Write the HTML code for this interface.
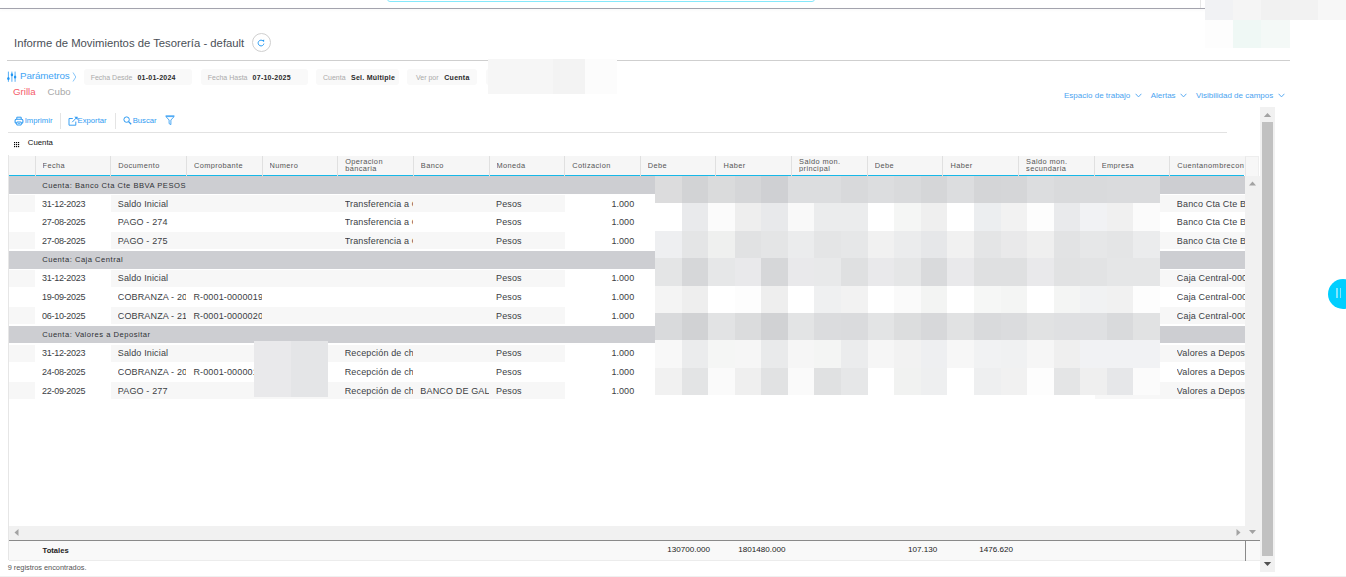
<!DOCTYPE html><html><head><meta charset="utf-8"><style>
*{margin:0;padding:0;box-sizing:border-box}
html,body{width:1346px;height:577px;overflow:hidden;background:#fff;font-family:"Liberation Sans", sans-serif;position:relative}
.a{position:absolute}
.t{position:absolute;white-space:nowrap;line-height:1}
</style></head><body>
<div class="a" style="left:387px;top:-20px;width:428px;height:22px;border:1px solid #85e8fb;border-radius:3px"></div>
<div class="a" style="left:0;top:8px;width:1205px;height:1px;background:#a3a3ad;box-shadow:0 1px 3px rgba(0,0,0,0.06)"></div>
<div class="a" style="left:1200px;top:0;width:1px;height:8px;background:#e6e6e6"></div>
<div class="a" style="left:1205.00px;top:0;width:28.3px;height:20px;background:#f1f2f4"></div>
<div class="a" style="left:1233.20px;top:0;width:28.3px;height:20px;background:#f5f5f5"></div>
<div class="a" style="left:1261.40px;top:0;width:28.3px;height:20px;background:#f1f1f1"></div>
<div class="a" style="left:1289.60px;top:0;width:28.3px;height:20px;background:#f2f2f2"></div>
<div class="a" style="left:1317.80px;top:0;width:28.3px;height:20px;background:#f7f7f7"></div>
<div class="a" style="left:1205.00px;top:20px;width:28.3px;height:28px;background:#fdfdfd"></div>
<div class="a" style="left:1233.20px;top:20px;width:28.3px;height:28px;background:#eff8f5"></div>
<div class="a" style="left:1261.40px;top:20px;width:28.3px;height:28px;background:#f4f9f7"></div>
<div class="a" style="left:1289.60px;top:20px;width:28.3px;height:28px;background:#ffffff"></div>
<div class="a" style="left:1317.80px;top:20px;width:28.3px;height:28px;background:#ffffff"></div>
<div class="t" style="left:14px;top:37.8px;font-size:11.3px;color:#4a4f57">Informe de Movimientos de Tesorería - default</div>
<div class="a" style="left:252px;top:33px;width:19px;height:19px;border:1px solid #cfcfcf;border-radius:50%"></div>
<svg class="a" style="left:257px;top:39px" width="8" height="8" viewBox="0 0 8 8"><path d="M6.3 2.2 A2.9 2.9 0 1 0 6.9 4.6" fill="none" stroke="#2a9df4" stroke-width="1"/><path d="M4.9 1.6 L7.2 0.6 L7.1 3.1 Z" fill="#2a9df4"/></svg>
<div class="a" style="left:7px;top:60px;width:1283px;height:1px;background:#cfcfcf"></div>
<svg class="a" style="left:7px;top:70.5px" width="10" height="11.5" viewBox="0 0 10 11.5"><path d="M1.4 0.6V10.8M4.9 0.6V10.8M8.1 0.6V10.8" stroke="#42a5f5" stroke-width="0.9"/><ellipse cx="1.4" cy="7.5" rx="1.2" ry="1.5" fill="#2196f3"/><ellipse cx="4.9" cy="3.75" rx="1.2" ry="1.5" fill="#2196f3"/><ellipse cx="8.1" cy="6" rx="1.2" ry="1.5" fill="#2196f3"/></svg>
<div class="t" style="left:20px;top:70.5px;font-size:9.8px;letter-spacing:-0.1px;color:#42a5f5">Parámetros</div>
<svg class="a" style="left:72px;top:72px" width="5" height="10" viewBox="0 0 5 10"><path d="M1 0.5 L3.8 5 L1 9.5" fill="none" stroke="#69b8f7" stroke-width="0.8"/></svg>
<div class="a" style="left:84px;top:69px;width:108px;height:16px;background:#f9f9f9;border-radius:3px"></div>
<div class="t" style="left:90.7px;top:74px;font-size:7px;color:#aaaaaa">Fecha Desde</div>
<div class="t" style="left:137.4px;top:74px;font-size:7px;font-weight:bold;letter-spacing:0.25px;color:#2a2a2a">01-01-2024</div>
<div class="a" style="left:201px;top:69px;width:107px;height:16px;background:#f9f9f9;border-radius:3px"></div>
<div class="t" style="left:207.8px;top:74px;font-size:7px;color:#aaaaaa">Fecha Hasta</div>
<div class="t" style="left:252.6px;top:74px;font-size:7px;font-weight:bold;letter-spacing:0.25px;color:#2a2a2a">07-10-2025</div>
<div class="a" style="left:316px;top:69px;width:83px;height:16px;background:#f9f9f9;border-radius:3px"></div>
<div class="t" style="left:323px;top:74px;font-size:7px;color:#aaaaaa">Cuenta</div>
<div class="t" style="left:351px;top:74px;font-size:7px;font-weight:bold;letter-spacing:0.25px;color:#2a2a2a">Sel. Múltiple</div>
<div class="a" style="left:407px;top:69px;width:70px;height:16px;background:#f9f9f9;border-radius:3px"></div>
<div class="t" style="left:416px;top:74px;font-size:7px;color:#aaaaaa">Ver por</div>
<div class="t" style="left:444.3px;top:74px;font-size:7px;font-weight:bold;letter-spacing:0.25px;color:#2a2a2a">Cuenta</div>
<div class="a" style="left:486px;top:69px;width:74px;height:16px;background:#f9f9f9;border-radius:3px"></div>
<div class="a" style="left:488.00px;top:59px;width:32.3px;height:35px;background:#f6f6f6"></div>
<div class="a" style="left:520.25px;top:59px;width:32.3px;height:35px;background:#f6f6f6"></div>
<div class="a" style="left:552.50px;top:59px;width:32.3px;height:35px;background:#f3f3f3"></div>
<div class="a" style="left:584.75px;top:59px;width:32.3px;height:35px;background:#fcfcfc"></div>
<div class="t" style="left:13px;top:86.8px;font-size:9.7px;color:#f45b69">Grilla</div>
<div class="t" style="left:47.5px;top:86.8px;font-size:9.7px;color:#a8a8a8">Cubo</div>
<div class="t" style="left:1064px;top:92px;font-size:8px;color:#4aa3f0">Espacio de trabajo</div>
<svg class="a" style="left:1134.5px;top:93.3px" width="7" height="5" viewBox="0 0 7 5"><path d="M0.6 0.8 L3.5 3.9 L6.4 0.8" fill="none" stroke="#4aa3f0" stroke-width="0.9"/></svg>
<div class="t" style="left:1150.7px;top:92px;font-size:8px;color:#4aa3f0">Alertas</div>
<svg class="a" style="left:1179.5px;top:93.3px" width="7" height="5" viewBox="0 0 7 5"><path d="M0.6 0.8 L3.5 3.9 L6.4 0.8" fill="none" stroke="#4aa3f0" stroke-width="0.9"/></svg>
<div class="t" style="left:1196px;top:92px;font-size:8px;color:#4aa3f0">Visibilidad de campos</div>
<svg class="a" style="left:1277.5px;top:93.3px" width="7" height="5" viewBox="0 0 7 5"><path d="M0.6 0.8 L3.5 3.9 L6.4 0.8" fill="none" stroke="#4aa3f0" stroke-width="0.9"/></svg>
<svg class="a" style="left:13.5px;top:115.5px" width="10" height="10" viewBox="0 0 10 10"><path d="M2.8 3.2V1.2H7.2V3.2" fill="none" stroke="#2f9bf2" stroke-width="1"/><rect x="1.1" y="3.3" width="7.8" height="4" rx="1.3" fill="none" stroke="#2f9bf2" stroke-width="1.1"/><path d="M2.8 6H7.2V9H2.8Z" fill="#fff" stroke="#2f9bf2" stroke-width="1"/><path d="M4 7.4H6" stroke="#2f9bf2" stroke-width="0.8"/></svg>
<div class="t" style="left:24.7px;top:116.5px;font-size:7.7px;color:#2f9bf2">Imprimir</div>
<div class="a" style="left:60px;top:113px;width:1px;height:16px;background:#e4e4e4"></div>
<svg class="a" style="left:67.5px;top:115.5px" width="11" height="10" viewBox="0 0 11 10"><path d="M4.8 2.5H1V9.2H7.8V5.6" fill="none" stroke="#2f9bf2" stroke-width="0.95"/><path d="M4.2 6.2 L8.6 1.6" stroke="#2f9bf2" stroke-width="0.95"/><path d="M6.3 0.7H9.6V4Z" fill="#2f9bf2"/></svg>
<div class="t" style="left:77.6px;top:116.5px;font-size:7.7px;color:#2f9bf2">Exportar</div>
<div class="a" style="left:115px;top:113px;width:1px;height:16px;background:#e4e4e4"></div>
<svg class="a" style="left:122.5px;top:115.5px" width="9" height="9" viewBox="0 0 9 9"><circle cx="3.6" cy="3.6" r="2.7" fill="none" stroke="#2f9bf2" stroke-width="1"/><path d="M5.6 5.6 L8.2 8.2" stroke="#2f9bf2" stroke-width="1.3"/></svg>
<div class="t" style="left:132.7px;top:116.5px;font-size:7.7px;color:#2f9bf2">Buscar</div>
<svg class="a" style="left:164.5px;top:115px" width="10" height="10" viewBox="0 0 10 10"><path d="M0.6 0.8H9.4M0.9 1.6H9.1L5.9 5V9.6L4.1 8.6V5Z" fill="none" stroke="#2f9bf2" stroke-width="0.85"/></svg>
<div class="a" style="left:8px;top:132px;width:1219px;height:1px;background:#e2e2e2"></div>
<svg class="a" style="left:14px;top:142px" width="6" height="6" viewBox="0 0 6 6"><rect x="0" y="0" width="1.15" height="1.15" fill="#000"/><rect x="2" y="0" width="1.15" height="1.15" fill="#000"/><rect x="4" y="0" width="1.15" height="1.15" fill="#000"/><rect x="0" y="2" width="1.15" height="1.15" fill="#000"/><rect x="2" y="2" width="1.15" height="1.15" fill="#000"/><rect x="4" y="2" width="1.15" height="1.15" fill="#000"/><rect x="0" y="4" width="1.15" height="1.15" fill="#000"/><rect x="2" y="4" width="1.15" height="1.15" fill="#000"/><rect x="4" y="4" width="1.15" height="1.15" fill="#000"/></svg>
<div class="t" style="left:27.8px;top:138.6px;font-size:7.8px;color:#111">Cuenta</div>
<div class="a" style="left:1260px;top:107px;width:15px;height:465px;background:#f1f1f1"></div>
<div class="a" style="left:1262px;top:122px;width:11px;height:434px;background:#c1c1c1"></div>
<svg class="a" style="left:1263px;top:112px" width="9" height="6" viewBox="0 0 9 6"><path d="M0.8 5 L4.5 1 L8.2 5Z" fill="#a3a3a3"/></svg>
<svg class="a" style="left:1263px;top:561px" width="9" height="6" viewBox="0 0 9 6"><path d="M0.8 1 L4.5 5 L8.2 1Z" fill="#505050"/></svg>
<div class="a" style="left:8px;top:155px;width:1px;height:405px;background:#e6e6e6"></div>
<div class="a" style="left:9px;top:155.5px;width:1236px;height:19.5px;background:#f6f6f6"></div>
<div class="a" style="left:9px;top:175px;width:1235px;height:1.3px;background:#16b8e8"></div>
<div class="a" style="left:34.60px;top:155.5px;width:1px;height:20.5px;background:#e0e0e0"></div>
<div class="a" style="left:110.25px;top:155.5px;width:1px;height:20.5px;background:#e0e0e0"></div>
<div class="a" style="left:185.90px;top:155.5px;width:1px;height:20.5px;background:#e0e0e0"></div>
<div class="a" style="left:261.55px;top:155.5px;width:1px;height:20.5px;background:#e0e0e0"></div>
<div class="a" style="left:337.20px;top:155.5px;width:1px;height:20.5px;background:#e0e0e0"></div>
<div class="a" style="left:412.85px;top:155.5px;width:1px;height:20.5px;background:#e0e0e0"></div>
<div class="a" style="left:488.50px;top:155.5px;width:1px;height:20.5px;background:#e0e0e0"></div>
<div class="a" style="left:564.15px;top:155.5px;width:1px;height:20.5px;background:#e0e0e0"></div>
<div class="a" style="left:639.80px;top:155.5px;width:1px;height:20.5px;background:#e0e0e0"></div>
<div class="a" style="left:715.45px;top:155.5px;width:1px;height:20.5px;background:#e0e0e0"></div>
<div class="a" style="left:791.10px;top:155.5px;width:1px;height:20.5px;background:#e0e0e0"></div>
<div class="a" style="left:866.75px;top:155.5px;width:1px;height:20.5px;background:#e0e0e0"></div>
<div class="a" style="left:942.40px;top:155.5px;width:1px;height:20.5px;background:#e0e0e0"></div>
<div class="a" style="left:1018.05px;top:155.5px;width:1px;height:20.5px;background:#e0e0e0"></div>
<div class="a" style="left:1093.70px;top:155.5px;width:1px;height:20.5px;background:#e0e0e0"></div>
<div class="a" style="left:1169.35px;top:155.5px;width:1px;height:20.5px;background:#e0e0e0"></div>
<div class="t" style="left:42.60px;top:161.6px;width:66.7px;overflow:hidden;font-size:7.4px;letter-spacing:0.4px;color:#555">Fecha</div>
<div class="t" style="left:118.25px;top:161.6px;width:66.7px;overflow:hidden;font-size:7.4px;letter-spacing:0.4px;color:#555">Documento</div>
<div class="t" style="left:193.90px;top:161.6px;width:66.7px;overflow:hidden;font-size:7.4px;letter-spacing:0.4px;color:#555">Comprobante</div>
<div class="t" style="left:269.55px;top:161.6px;width:66.7px;overflow:hidden;font-size:7.4px;letter-spacing:0.4px;color:#555">Numero</div>
<div class="t" style="left:345.20px;top:158.1px;width:66.7px;overflow:hidden;font-size:7.4px;letter-spacing:0.4px;line-height:7.1px;color:#555">Operacion<br>bancaria</div>
<div class="t" style="left:420.85px;top:161.6px;width:66.7px;overflow:hidden;font-size:7.4px;letter-spacing:0.4px;color:#555">Banco</div>
<div class="t" style="left:496.50px;top:161.6px;width:66.7px;overflow:hidden;font-size:7.4px;letter-spacing:0.4px;color:#555">Moneda</div>
<div class="t" style="left:572.15px;top:161.6px;width:66.7px;overflow:hidden;font-size:7.4px;letter-spacing:0.4px;color:#555">Cotizacion</div>
<div class="t" style="left:647.80px;top:161.6px;width:66.7px;overflow:hidden;font-size:7.4px;letter-spacing:0.4px;color:#555">Debe</div>
<div class="t" style="left:723.45px;top:161.6px;width:66.7px;overflow:hidden;font-size:7.4px;letter-spacing:0.4px;color:#555">Haber</div>
<div class="t" style="left:799.10px;top:158.1px;width:66.7px;overflow:hidden;font-size:7.4px;letter-spacing:0.4px;line-height:7.1px;color:#555">Saldo mon.<br>principal</div>
<div class="t" style="left:874.75px;top:161.6px;width:66.7px;overflow:hidden;font-size:7.4px;letter-spacing:0.4px;color:#555">Debe</div>
<div class="t" style="left:950.40px;top:161.6px;width:66.7px;overflow:hidden;font-size:7.4px;letter-spacing:0.4px;color:#555">Haber</div>
<div class="t" style="left:1026.05px;top:158.1px;width:66.7px;overflow:hidden;font-size:7.4px;letter-spacing:0.4px;line-height:7.1px;color:#555">Saldo mon.<br>secundaria</div>
<div class="t" style="left:1101.70px;top:161.6px;width:66.7px;overflow:hidden;font-size:7.4px;letter-spacing:0.4px;color:#555">Empresa</div>
<div class="t" style="left:1177.35px;top:161.6px;width:66.7px;overflow:hidden;font-size:7.4px;letter-spacing:0.4px;color:#555">Cuentanombrecontable</div>
<div class="a" style="left:1245px;top:155.5px;width:14px;height:20px;background:#f7f7f7;border-left:1px solid #e8e8e8;border-top:1px solid #eeeeee;border-right:1px solid #eeeeee"></div>
<div class="a" style="left:9px;top:176.00px;width:1236px;height:17.80px;background:#cdced2"></div>
<div class="t" style="left:42.2px;top:181.60px;font-size:7.6px;letter-spacing:0.5px;color:#2e3035">Cuenta: Banco Cta Cte BBVA PESOS</div>
<div class="a" style="left:9px;top:194.90px;width:25.60px;height:17.10px;background:#f7f7f7"></div>
<div class="a" style="left:111.05px;top:194.90px;width:453.60px;height:17.10px;background:#f7f7f7"></div>
<div class="a" style="left:1094.50px;top:194.90px;width:150.50px;height:17.10px;background:#f7f7f7"></div>
<div class="t" style="left:42.10px;top:199.60px;width:68.20px;overflow:hidden;font-size:9px;letter-spacing:-0.3px;color:#3b3e44">31-12-2023</div>
<div class="t" style="left:117.75px;top:199.60px;width:68.20px;overflow:hidden;font-size:9px;letter-spacing:0.15px;color:#3b3e44">Saldo Inicial</div>
<div class="t" style="left:344.70px;top:199.60px;width:68.20px;overflow:hidden;font-size:9px;letter-spacing:0.15px;color:#3b3e44">Transferencia a Caja</div>
<div class="t" style="left:496.00px;top:199.60px;width:68.20px;overflow:hidden;font-size:9px;letter-spacing:0.15px;color:#3b3e44">Pesos</div>
<div class="t" style="left:564.15px;top:199.60px;width:70.00px;text-align:right;font-size:9px;color:#3b3e44">1.000</div>
<div class="t" style="left:1176.85px;top:199.60px;width:68.20px;overflow:hidden;font-size:9px;letter-spacing:0.15px;color:#3b3e44">Banco Cta Cte BBVA</div>
<div class="t" style="left:42.10px;top:218.30px;width:68.20px;overflow:hidden;font-size:9px;letter-spacing:-0.3px;color:#3b3e44">27-08-2025</div>
<div class="t" style="left:117.75px;top:218.30px;width:68.20px;overflow:hidden;font-size:9px;letter-spacing:0.15px;color:#3b3e44">PAGO - 274</div>
<div class="t" style="left:344.70px;top:218.30px;width:68.20px;overflow:hidden;font-size:9px;letter-spacing:0.15px;color:#3b3e44">Transferencia a Caja</div>
<div class="t" style="left:496.00px;top:218.30px;width:68.20px;overflow:hidden;font-size:9px;letter-spacing:0.15px;color:#3b3e44">Pesos</div>
<div class="t" style="left:564.15px;top:218.30px;width:70.00px;text-align:right;font-size:9px;color:#3b3e44">1.000</div>
<div class="t" style="left:1176.85px;top:218.30px;width:68.20px;overflow:hidden;font-size:9px;letter-spacing:0.15px;color:#3b3e44">Banco Cta Cte BBVA</div>
<div class="a" style="left:9px;top:232.30px;width:25.60px;height:17.10px;background:#f7f7f7"></div>
<div class="a" style="left:111.05px;top:232.30px;width:453.60px;height:17.10px;background:#f7f7f7"></div>
<div class="a" style="left:1094.50px;top:232.30px;width:150.50px;height:17.10px;background:#f7f7f7"></div>
<div class="t" style="left:42.10px;top:237.00px;width:68.20px;overflow:hidden;font-size:9px;letter-spacing:-0.3px;color:#3b3e44">27-08-2025</div>
<div class="t" style="left:117.75px;top:237.00px;width:68.20px;overflow:hidden;font-size:9px;letter-spacing:0.15px;color:#3b3e44">PAGO - 275</div>
<div class="t" style="left:344.70px;top:237.00px;width:68.20px;overflow:hidden;font-size:9px;letter-spacing:0.15px;color:#3b3e44">Transferencia a Caja</div>
<div class="t" style="left:496.00px;top:237.00px;width:68.20px;overflow:hidden;font-size:9px;letter-spacing:0.15px;color:#3b3e44">Pesos</div>
<div class="t" style="left:564.15px;top:237.00px;width:70.00px;text-align:right;font-size:9px;color:#3b3e44">1.000</div>
<div class="t" style="left:1176.85px;top:237.00px;width:68.20px;overflow:hidden;font-size:9px;letter-spacing:0.15px;color:#3b3e44">Banco Cta Cte BBVA</div>
<div class="a" style="left:9px;top:250.80px;width:1236px;height:17.80px;background:#cdced2"></div>
<div class="t" style="left:42.2px;top:256.40px;font-size:7.6px;letter-spacing:0.5px;color:#2e3035">Cuenta: Caja Central</div>
<div class="a" style="left:9px;top:269.70px;width:25.60px;height:17.10px;background:#f7f7f7"></div>
<div class="a" style="left:111.05px;top:269.70px;width:453.60px;height:17.10px;background:#f7f7f7"></div>
<div class="a" style="left:1094.50px;top:269.70px;width:150.50px;height:17.10px;background:#f7f7f7"></div>
<div class="t" style="left:42.10px;top:274.40px;width:68.20px;overflow:hidden;font-size:9px;letter-spacing:-0.3px;color:#3b3e44">31-12-2023</div>
<div class="t" style="left:117.75px;top:274.40px;width:68.20px;overflow:hidden;font-size:9px;letter-spacing:0.15px;color:#3b3e44">Saldo Inicial</div>
<div class="t" style="left:496.00px;top:274.40px;width:68.20px;overflow:hidden;font-size:9px;letter-spacing:0.15px;color:#3b3e44">Pesos</div>
<div class="t" style="left:564.15px;top:274.40px;width:70.00px;text-align:right;font-size:9px;color:#3b3e44">1.000</div>
<div class="t" style="left:1176.85px;top:274.40px;width:68.20px;overflow:hidden;font-size:9px;letter-spacing:0.15px;color:#3b3e44">Caja Central-0001</div>
<div class="t" style="left:42.10px;top:293.10px;width:68.20px;overflow:hidden;font-size:9px;letter-spacing:-0.3px;color:#3b3e44">19-09-2025</div>
<div class="t" style="left:117.75px;top:293.10px;width:68.20px;overflow:hidden;font-size:9px;letter-spacing:0.15px;color:#3b3e44">COBRANZA - 209</div>
<div class="t" style="left:193.40px;top:293.10px;width:68.20px;overflow:hidden;font-size:9px;letter-spacing:0.15px;color:#3b3e44">R-0001-00000195</div>
<div class="t" style="left:496.00px;top:293.10px;width:68.20px;overflow:hidden;font-size:9px;letter-spacing:0.15px;color:#3b3e44">Pesos</div>
<div class="t" style="left:564.15px;top:293.10px;width:70.00px;text-align:right;font-size:9px;color:#3b3e44">1.000</div>
<div class="t" style="left:1176.85px;top:293.10px;width:68.20px;overflow:hidden;font-size:9px;letter-spacing:0.15px;color:#3b3e44">Caja Central-0001</div>
<div class="a" style="left:9px;top:307.10px;width:25.60px;height:17.10px;background:#f7f7f7"></div>
<div class="a" style="left:111.05px;top:307.10px;width:453.60px;height:17.10px;background:#f7f7f7"></div>
<div class="a" style="left:1094.50px;top:307.10px;width:150.50px;height:17.10px;background:#f7f7f7"></div>
<div class="t" style="left:42.10px;top:311.80px;width:68.20px;overflow:hidden;font-size:9px;letter-spacing:-0.3px;color:#3b3e44">06-10-2025</div>
<div class="t" style="left:117.75px;top:311.80px;width:68.20px;overflow:hidden;font-size:9px;letter-spacing:0.15px;color:#3b3e44">COBRANZA - 210</div>
<div class="t" style="left:193.40px;top:311.80px;width:68.20px;overflow:hidden;font-size:9px;letter-spacing:0.15px;color:#3b3e44">R-0001-00000200</div>
<div class="t" style="left:496.00px;top:311.80px;width:68.20px;overflow:hidden;font-size:9px;letter-spacing:0.15px;color:#3b3e44">Pesos</div>
<div class="t" style="left:564.15px;top:311.80px;width:70.00px;text-align:right;font-size:9px;color:#3b3e44">1.000</div>
<div class="t" style="left:1176.85px;top:311.80px;width:68.20px;overflow:hidden;font-size:9px;letter-spacing:0.15px;color:#3b3e44">Caja Central-0001</div>
<div class="a" style="left:9px;top:325.60px;width:1236px;height:17.80px;background:#cdced2"></div>
<div class="t" style="left:42.2px;top:331.20px;font-size:7.6px;letter-spacing:0.5px;color:#2e3035">Cuenta: Valores a Depositar</div>
<div class="a" style="left:9px;top:344.50px;width:25.60px;height:17.10px;background:#f7f7f7"></div>
<div class="a" style="left:111.05px;top:344.50px;width:453.60px;height:17.10px;background:#f7f7f7"></div>
<div class="a" style="left:1094.50px;top:344.50px;width:150.50px;height:17.10px;background:#f7f7f7"></div>
<div class="t" style="left:42.10px;top:349.20px;width:68.20px;overflow:hidden;font-size:9px;letter-spacing:-0.3px;color:#3b3e44">31-12-2023</div>
<div class="t" style="left:117.75px;top:349.20px;width:68.20px;overflow:hidden;font-size:9px;letter-spacing:0.15px;color:#3b3e44">Saldo Inicial</div>
<div class="t" style="left:344.70px;top:349.20px;width:68.20px;overflow:hidden;font-size:9px;letter-spacing:0.15px;color:#3b3e44">Recepción de cheques</div>
<div class="t" style="left:496.00px;top:349.20px;width:68.20px;overflow:hidden;font-size:9px;letter-spacing:0.15px;color:#3b3e44">Pesos</div>
<div class="t" style="left:564.15px;top:349.20px;width:70.00px;text-align:right;font-size:9px;color:#3b3e44">1.000</div>
<div class="t" style="left:1176.85px;top:349.20px;width:68.20px;overflow:hidden;font-size:9px;letter-spacing:0.15px;color:#3b3e44">Valores a Depositar</div>
<div class="t" style="left:42.10px;top:367.90px;width:68.20px;overflow:hidden;font-size:9px;letter-spacing:-0.3px;color:#3b3e44">24-08-2025</div>
<div class="t" style="left:117.75px;top:367.90px;width:68.20px;overflow:hidden;font-size:9px;letter-spacing:0.15px;color:#3b3e44">COBRANZA - 208</div>
<div class="t" style="left:193.40px;top:367.90px;width:68.20px;overflow:hidden;font-size:9px;letter-spacing:0.15px;color:#3b3e44">R-0001-00000190</div>
<div class="t" style="left:344.70px;top:367.90px;width:68.20px;overflow:hidden;font-size:9px;letter-spacing:0.15px;color:#3b3e44">Recepción de cheques</div>
<div class="t" style="left:496.00px;top:367.90px;width:68.20px;overflow:hidden;font-size:9px;letter-spacing:0.15px;color:#3b3e44">Pesos</div>
<div class="t" style="left:564.15px;top:367.90px;width:70.00px;text-align:right;font-size:9px;color:#3b3e44">1.000</div>
<div class="t" style="left:1176.85px;top:367.90px;width:68.20px;overflow:hidden;font-size:9px;letter-spacing:0.15px;color:#3b3e44">Valores a Depositar</div>
<div class="a" style="left:9px;top:381.90px;width:25.60px;height:17.10px;background:#f7f7f7"></div>
<div class="a" style="left:111.05px;top:381.90px;width:453.60px;height:17.10px;background:#f7f7f7"></div>
<div class="a" style="left:1094.50px;top:381.90px;width:150.50px;height:17.10px;background:#f7f7f7"></div>
<div class="t" style="left:42.10px;top:386.60px;width:68.20px;overflow:hidden;font-size:9px;letter-spacing:-0.3px;color:#3b3e44">22-09-2025</div>
<div class="t" style="left:117.75px;top:386.60px;width:68.20px;overflow:hidden;font-size:9px;letter-spacing:0.15px;color:#3b3e44">PAGO - 277</div>
<div class="t" style="left:344.70px;top:386.60px;width:68.20px;overflow:hidden;font-size:9px;letter-spacing:0.15px;color:#3b3e44">Recepción de cheques</div>
<div class="t" style="left:420.35px;top:386.60px;width:68.20px;overflow:hidden;font-size:9px;letter-spacing:0.15px;color:#3b3e44">BANCO DE GALICIA</div>
<div class="t" style="left:496.00px;top:386.60px;width:68.20px;overflow:hidden;font-size:9px;letter-spacing:0.15px;color:#3b3e44">Pesos</div>
<div class="t" style="left:564.15px;top:386.60px;width:70.00px;text-align:right;font-size:9px;color:#3b3e44">1.000</div>
<div class="t" style="left:1176.85px;top:386.60px;width:68.20px;overflow:hidden;font-size:9px;letter-spacing:0.15px;color:#3b3e44">Valores a Depositar</div>
<div class="a" style="left:655.00px;top:176.00px;width:26.88px;height:27.70px;background:#dcdcdd"></div>
<div class="a" style="left:681.58px;top:176.00px;width:26.88px;height:27.70px;background:#d2d3d5"></div>
<div class="a" style="left:708.16px;top:176.00px;width:26.88px;height:27.70px;background:#dadbdc"></div>
<div class="a" style="left:734.74px;top:176.00px;width:26.88px;height:27.70px;background:#d5d6d8"></div>
<div class="a" style="left:761.32px;top:176.00px;width:26.88px;height:27.70px;background:#cfd0d3"></div>
<div class="a" style="left:787.90px;top:176.00px;width:26.88px;height:27.70px;background:#dcdddf"></div>
<div class="a" style="left:814.48px;top:176.00px;width:26.88px;height:27.70px;background:#dcdddf"></div>
<div class="a" style="left:841.06px;top:176.00px;width:26.88px;height:27.70px;background:#d8d9db"></div>
<div class="a" style="left:867.64px;top:176.00px;width:26.88px;height:27.70px;background:#dcdddf"></div>
<div class="a" style="left:894.22px;top:176.00px;width:26.88px;height:27.70px;background:#d9dadc"></div>
<div class="a" style="left:920.80px;top:176.00px;width:26.88px;height:27.70px;background:#d5d6d8"></div>
<div class="a" style="left:947.38px;top:176.00px;width:26.88px;height:27.70px;background:#dcdddf"></div>
<div class="a" style="left:973.96px;top:176.00px;width:26.88px;height:27.70px;background:#d4d5d7"></div>
<div class="a" style="left:1000.54px;top:176.00px;width:26.88px;height:27.70px;background:#d5d6d8"></div>
<div class="a" style="left:1027.12px;top:176.00px;width:26.88px;height:27.70px;background:#dcdddf"></div>
<div class="a" style="left:1053.70px;top:176.00px;width:26.88px;height:27.70px;background:#d9dadc"></div>
<div class="a" style="left:1080.28px;top:176.00px;width:26.88px;height:27.70px;background:#d9dadc"></div>
<div class="a" style="left:1106.86px;top:176.00px;width:26.88px;height:27.70px;background:#dadbdd"></div>
<div class="a" style="left:1133.44px;top:176.00px;width:26.88px;height:27.70px;background:#dadbdd"></div>
<div class="a" style="left:655.00px;top:203.40px;width:26.88px;height:27.70px;background:#ffffff"></div>
<div class="a" style="left:681.58px;top:203.40px;width:26.88px;height:27.70px;background:#e9eaec"></div>
<div class="a" style="left:708.16px;top:203.40px;width:26.88px;height:27.70px;background:#fbfbfb"></div>
<div class="a" style="left:734.74px;top:203.40px;width:26.88px;height:27.70px;background:#eeeeee"></div>
<div class="a" style="left:761.32px;top:203.40px;width:26.88px;height:27.70px;background:#e8e9eb"></div>
<div class="a" style="left:787.90px;top:203.40px;width:26.88px;height:27.70px;background:#f9f9f9"></div>
<div class="a" style="left:814.48px;top:203.40px;width:26.88px;height:27.70px;background:#ebeced"></div>
<div class="a" style="left:841.06px;top:203.40px;width:26.88px;height:27.70px;background:#ebeced"></div>
<div class="a" style="left:867.64px;top:203.40px;width:26.88px;height:27.70px;background:#ffffff"></div>
<div class="a" style="left:894.22px;top:203.40px;width:26.88px;height:27.70px;background:#f5f6f5"></div>
<div class="a" style="left:920.80px;top:203.40px;width:26.88px;height:27.70px;background:#efefef"></div>
<div class="a" style="left:947.38px;top:203.40px;width:26.88px;height:27.70px;background:#ffffff"></div>
<div class="a" style="left:973.96px;top:203.40px;width:26.88px;height:27.70px;background:#eceef0"></div>
<div class="a" style="left:1000.54px;top:203.40px;width:26.88px;height:27.70px;background:#f2f2f2"></div>
<div class="a" style="left:1027.12px;top:203.40px;width:26.88px;height:27.70px;background:#fdfdfd"></div>
<div class="a" style="left:1053.70px;top:203.40px;width:26.88px;height:27.70px;background:#e9eaec"></div>
<div class="a" style="left:1080.28px;top:203.40px;width:26.88px;height:27.70px;background:#f1f2f4"></div>
<div class="a" style="left:1106.86px;top:203.40px;width:26.88px;height:27.70px;background:#f0f0f0"></div>
<div class="a" style="left:1133.44px;top:203.40px;width:26.88px;height:27.70px;background:#fbfbfb"></div>
<div class="a" style="left:655.00px;top:230.80px;width:26.88px;height:27.70px;background:#eeeff1"></div>
<div class="a" style="left:681.58px;top:230.80px;width:26.88px;height:27.70px;background:#e4e5e6"></div>
<div class="a" style="left:708.16px;top:230.80px;width:26.88px;height:27.70px;background:#eff0ef"></div>
<div class="a" style="left:734.74px;top:230.80px;width:26.88px;height:27.70px;background:#e1e2e3"></div>
<div class="a" style="left:761.32px;top:230.80px;width:26.88px;height:27.70px;background:#e4e5e6"></div>
<div class="a" style="left:787.90px;top:230.80px;width:26.88px;height:27.70px;background:#ebeced"></div>
<div class="a" style="left:814.48px;top:230.80px;width:26.88px;height:27.70px;background:#e4e5e6"></div>
<div class="a" style="left:841.06px;top:230.80px;width:26.88px;height:27.70px;background:#e6e7e8"></div>
<div class="a" style="left:867.64px;top:230.80px;width:26.88px;height:27.70px;background:#f1f1f1"></div>
<div class="a" style="left:894.22px;top:230.80px;width:26.88px;height:27.70px;background:#ebeced"></div>
<div class="a" style="left:920.80px;top:230.80px;width:26.88px;height:27.70px;background:#e6e7e9"></div>
<div class="a" style="left:947.38px;top:230.80px;width:26.88px;height:27.70px;background:#f1f1f1"></div>
<div class="a" style="left:973.96px;top:230.80px;width:26.88px;height:27.70px;background:#e4e5e6"></div>
<div class="a" style="left:1000.54px;top:230.80px;width:26.88px;height:27.70px;background:#e9e9ea"></div>
<div class="a" style="left:1027.12px;top:230.80px;width:26.88px;height:27.70px;background:#efefef"></div>
<div class="a" style="left:1053.70px;top:230.80px;width:26.88px;height:27.70px;background:#e2e3e4"></div>
<div class="a" style="left:1080.28px;top:230.80px;width:26.88px;height:27.70px;background:#e6e7e8"></div>
<div class="a" style="left:1106.86px;top:230.80px;width:26.88px;height:27.70px;background:#e4e5e6"></div>
<div class="a" style="left:1133.44px;top:230.80px;width:26.88px;height:27.70px;background:#ebeced"></div>
<div class="a" style="left:655.00px;top:258.20px;width:26.88px;height:27.70px;background:#e4e5e6"></div>
<div class="a" style="left:681.58px;top:258.20px;width:26.88px;height:27.70px;background:#d6d7d9"></div>
<div class="a" style="left:708.16px;top:258.20px;width:26.88px;height:27.70px;background:#e6e7e8"></div>
<div class="a" style="left:734.74px;top:258.20px;width:26.88px;height:27.70px;background:#e9e9eb"></div>
<div class="a" style="left:761.32px;top:258.20px;width:26.88px;height:27.70px;background:#d6d7d9"></div>
<div class="a" style="left:787.90px;top:258.20px;width:26.88px;height:27.70px;background:#e9e9eb"></div>
<div class="a" style="left:814.48px;top:258.20px;width:26.88px;height:27.70px;background:#e8e9ea"></div>
<div class="a" style="left:841.06px;top:258.20px;width:26.88px;height:27.70px;background:#dfe0e1"></div>
<div class="a" style="left:867.64px;top:258.20px;width:26.88px;height:27.70px;background:#e9e9eb"></div>
<div class="a" style="left:894.22px;top:258.20px;width:26.88px;height:27.70px;background:#e5e6e7"></div>
<div class="a" style="left:920.80px;top:258.20px;width:26.88px;height:27.70px;background:#d9dadc"></div>
<div class="a" style="left:947.38px;top:258.20px;width:26.88px;height:27.70px;background:#e9e9eb"></div>
<div class="a" style="left:973.96px;top:258.20px;width:26.88px;height:27.70px;background:#dfe0e1"></div>
<div class="a" style="left:1000.54px;top:258.20px;width:26.88px;height:27.70px;background:#dfe0e1"></div>
<div class="a" style="left:1027.12px;top:258.20px;width:26.88px;height:27.70px;background:#e9e9eb"></div>
<div class="a" style="left:1053.70px;top:258.20px;width:26.88px;height:27.70px;background:#e1e2e3"></div>
<div class="a" style="left:1080.28px;top:258.20px;width:26.88px;height:27.70px;background:#e2e3e4"></div>
<div class="a" style="left:1106.86px;top:258.20px;width:26.88px;height:27.70px;background:#e5e6e7"></div>
<div class="a" style="left:1133.44px;top:258.20px;width:26.88px;height:27.70px;background:#e5e6e7"></div>
<div class="a" style="left:655.00px;top:285.60px;width:26.88px;height:27.70px;background:#f4f4f4"></div>
<div class="a" style="left:681.58px;top:285.60px;width:26.88px;height:27.70px;background:#eeeeee"></div>
<div class="a" style="left:708.16px;top:285.60px;width:26.88px;height:27.70px;background:#ffffff"></div>
<div class="a" style="left:734.74px;top:285.60px;width:26.88px;height:27.70px;background:#fdfdfd"></div>
<div class="a" style="left:761.32px;top:285.60px;width:26.88px;height:27.70px;background:#eeeeee"></div>
<div class="a" style="left:787.90px;top:285.60px;width:26.88px;height:27.70px;background:#ffffff"></div>
<div class="a" style="left:814.48px;top:285.60px;width:26.88px;height:27.70px;background:#eff0f1"></div>
<div class="a" style="left:841.06px;top:285.60px;width:26.88px;height:27.70px;background:#f2f2f2"></div>
<div class="a" style="left:867.64px;top:285.60px;width:26.88px;height:27.70px;background:#ffffff"></div>
<div class="a" style="left:894.22px;top:285.60px;width:26.88px;height:27.70px;background:#fafafa"></div>
<div class="a" style="left:920.80px;top:285.60px;width:26.88px;height:27.70px;background:#f3f4f3"></div>
<div class="a" style="left:947.38px;top:285.60px;width:26.88px;height:27.70px;background:#ffffff"></div>
<div class="a" style="left:973.96px;top:285.60px;width:26.88px;height:27.70px;background:#f6f7f6"></div>
<div class="a" style="left:1000.54px;top:285.60px;width:26.88px;height:27.70px;background:#f4f5f4"></div>
<div class="a" style="left:1027.12px;top:285.60px;width:26.88px;height:27.70px;background:#ffffff"></div>
<div class="a" style="left:1053.70px;top:285.60px;width:26.88px;height:27.70px;background:#f4f5f4"></div>
<div class="a" style="left:1080.28px;top:285.60px;width:26.88px;height:27.70px;background:#f1f2f3"></div>
<div class="a" style="left:1106.86px;top:285.60px;width:26.88px;height:27.70px;background:#f1f1f1"></div>
<div class="a" style="left:1133.44px;top:285.60px;width:26.88px;height:27.70px;background:#fdfdfd"></div>
<div class="a" style="left:655.00px;top:313.00px;width:26.88px;height:27.70px;background:#d9dadc"></div>
<div class="a" style="left:681.58px;top:313.00px;width:26.88px;height:27.70px;background:#d1d2d4"></div>
<div class="a" style="left:708.16px;top:313.00px;width:26.88px;height:27.70px;background:#e2e3e4"></div>
<div class="a" style="left:734.74px;top:313.00px;width:26.88px;height:27.70px;background:#dbdcdd"></div>
<div class="a" style="left:761.32px;top:313.00px;width:26.88px;height:27.70px;background:#d1d2d4"></div>
<div class="a" style="left:787.90px;top:313.00px;width:26.88px;height:27.70px;background:#e3e4e5"></div>
<div class="a" style="left:814.48px;top:313.00px;width:26.88px;height:27.70px;background:#dbdcde"></div>
<div class="a" style="left:841.06px;top:313.00px;width:26.88px;height:27.70px;background:#dadbdd"></div>
<div class="a" style="left:867.64px;top:313.00px;width:26.88px;height:27.70px;background:#e3e4e5"></div>
<div class="a" style="left:894.22px;top:313.00px;width:26.88px;height:27.70px;background:#dcddde"></div>
<div class="a" style="left:920.80px;top:313.00px;width:26.88px;height:27.70px;background:#d7d8da"></div>
<div class="a" style="left:947.38px;top:313.00px;width:26.88px;height:27.70px;background:#e1e2e3"></div>
<div class="a" style="left:973.96px;top:313.00px;width:26.88px;height:27.70px;background:#d9dadc"></div>
<div class="a" style="left:1000.54px;top:313.00px;width:26.88px;height:27.70px;background:#dbdcde"></div>
<div class="a" style="left:1027.12px;top:313.00px;width:26.88px;height:27.70px;background:#e1e2e3"></div>
<div class="a" style="left:1053.70px;top:313.00px;width:26.88px;height:27.70px;background:#dfe0e2"></div>
<div class="a" style="left:1080.28px;top:313.00px;width:26.88px;height:27.70px;background:#dfe0e2"></div>
<div class="a" style="left:1106.86px;top:313.00px;width:26.88px;height:27.70px;background:#d9dadc"></div>
<div class="a" style="left:1133.44px;top:313.00px;width:26.88px;height:27.70px;background:#e1e2e3"></div>
<div class="a" style="left:655.00px;top:340.40px;width:26.88px;height:27.70px;background:#f8f8f8"></div>
<div class="a" style="left:681.58px;top:340.40px;width:26.88px;height:27.70px;background:#ebeced"></div>
<div class="a" style="left:708.16px;top:340.40px;width:26.88px;height:27.70px;background:#f5f6f5"></div>
<div class="a" style="left:734.74px;top:340.40px;width:26.88px;height:27.70px;background:#f6f6f6"></div>
<div class="a" style="left:761.32px;top:340.40px;width:26.88px;height:27.70px;background:#e9eaeb"></div>
<div class="a" style="left:787.90px;top:340.40px;width:26.88px;height:27.70px;background:#f6f6f6"></div>
<div class="a" style="left:814.48px;top:340.40px;width:26.88px;height:27.70px;background:#f4f5f4"></div>
<div class="a" style="left:841.06px;top:340.40px;width:26.88px;height:27.70px;background:#ebeced"></div>
<div class="a" style="left:867.64px;top:340.40px;width:26.88px;height:27.70px;background:#f6f6f6"></div>
<div class="a" style="left:894.22px;top:340.40px;width:26.88px;height:27.70px;background:#f2f2f2"></div>
<div class="a" style="left:920.80px;top:340.40px;width:26.88px;height:27.70px;background:#eeeff1"></div>
<div class="a" style="left:947.38px;top:340.40px;width:26.88px;height:27.70px;background:#f7f7f7"></div>
<div class="a" style="left:973.96px;top:340.40px;width:26.88px;height:27.70px;background:#f1f2f3"></div>
<div class="a" style="left:1000.54px;top:340.40px;width:26.88px;height:27.70px;background:#f0f1f2"></div>
<div class="a" style="left:1027.12px;top:340.40px;width:26.88px;height:27.70px;background:#f6f6f6"></div>
<div class="a" style="left:1053.70px;top:340.40px;width:26.88px;height:27.70px;background:#efefef"></div>
<div class="a" style="left:1080.28px;top:340.40px;width:26.88px;height:27.70px;background:#f1f2f4"></div>
<div class="a" style="left:1106.86px;top:340.40px;width:26.88px;height:27.70px;background:#f1f2f4"></div>
<div class="a" style="left:1133.44px;top:340.40px;width:26.88px;height:27.70px;background:#f1f2f4"></div>
<div class="a" style="left:655.00px;top:367.80px;width:26.88px;height:27.70px;background:#f1f1f1"></div>
<div class="a" style="left:681.58px;top:367.80px;width:26.88px;height:27.70px;background:#e3e4e5"></div>
<div class="a" style="left:708.16px;top:367.80px;width:26.88px;height:27.70px;background:#fafafa"></div>
<div class="a" style="left:734.74px;top:367.80px;width:26.88px;height:27.70px;background:#efefef"></div>
<div class="a" style="left:761.32px;top:367.80px;width:26.88px;height:27.70px;background:#e1e2e3"></div>
<div class="a" style="left:787.90px;top:367.80px;width:26.88px;height:27.70px;background:#fafafa"></div>
<div class="a" style="left:814.48px;top:367.80px;width:26.88px;height:27.70px;background:#e0e1e2"></div>
<div class="a" style="left:841.06px;top:367.80px;width:26.88px;height:27.70px;background:#e6e7e8"></div>
<div class="a" style="left:867.64px;top:367.80px;width:26.88px;height:27.70px;background:#ffffff"></div>
<div class="a" style="left:894.22px;top:367.80px;width:26.88px;height:27.70px;background:#f1f2f1"></div>
<div class="a" style="left:920.80px;top:367.80px;width:26.88px;height:27.70px;background:#eeeff0"></div>
<div class="a" style="left:947.38px;top:367.80px;width:26.88px;height:27.70px;background:#ffffff"></div>
<div class="a" style="left:973.96px;top:367.80px;width:26.88px;height:27.70px;background:#eeeff0"></div>
<div class="a" style="left:1000.54px;top:367.80px;width:26.88px;height:27.70px;background:#f1f1f1"></div>
<div class="a" style="left:1027.12px;top:367.80px;width:26.88px;height:27.70px;background:#fdfdfd"></div>
<div class="a" style="left:1053.70px;top:367.80px;width:26.88px;height:27.70px;background:#e4e5e6"></div>
<div class="a" style="left:1080.28px;top:367.80px;width:26.88px;height:27.70px;background:#efefef"></div>
<div class="a" style="left:1106.86px;top:367.80px;width:26.88px;height:27.70px;background:#e6e7e9"></div>
<div class="a" style="left:1133.44px;top:367.80px;width:26.88px;height:27.70px;background:#fbfbfb"></div>
<div class="a" style="left:254px;top:341px;width:37.2px;height:56px;background:#e9e9eb"></div>
<div class="a" style="left:291px;top:341px;width:37px;height:56px;background:#e4e5e7"></div>
<div class="a" style="left:1245px;top:176px;width:15px;height:364px;background:#f1f1f1"></div>
<svg class="a" style="left:1248px;top:180px" width="9" height="7" viewBox="0 0 9 7"><path d="M1 5.5 L4.5 1.5 L8 5.5Z" fill="#a3a3a3"/></svg>
<svg class="a" style="left:1248px;top:528px" width="9" height="7" viewBox="0 0 9 7"><path d="M1 2 L4.5 6 L8 2Z" fill="#a3a3a3"/></svg>
<div class="a" style="left:9px;top:526px;width:1236px;height:14px;background:#f1f1f1"></div>
<svg class="a" style="left:13px;top:528px" width="7" height="9" viewBox="0 0 7 9"><path d="M5.5 1 L1.5 4.5 L5.5 8Z" fill="#a3a3a3"/></svg>
<svg class="a" style="left:1235px;top:528px" width="7" height="9" viewBox="0 0 7 9"><path d="M1.5 1 L5.5 4.5 L1.5 8Z" fill="#a3a3a3"/></svg>
<div class="a" style="left:9px;top:540px;width:1251px;height:1px;background:#8a8a8a"></div>
<div class="a" style="left:9px;top:541px;width:1251px;height:19.5px;background:#f9f9f9;border-bottom:1px solid #ececec"></div>
<div class="a" style="left:1245px;top:541px;width:1px;height:19.5px;background:#8a8a8a"></div>
<div class="t" style="left:42.6px;top:546.5px;font-size:7.6px;font-weight:bold;color:#222">Totales</div>
<div class="t" style="left:640px;top:546.3px;width:70px;text-align:right;font-size:8.1px;color:#222">130700.000</div>
<div class="t" style="left:715.5px;top:546.3px;width:70px;text-align:right;font-size:8.1px;color:#222">1801480.000</div>
<div class="t" style="left:867.2px;top:546.3px;width:70px;text-align:right;font-size:8.1px;color:#222">107.130</div>
<div class="t" style="left:943px;top:546.3px;width:70px;text-align:right;font-size:8.1px;color:#222">1476.620</div>
<div class="t" style="left:7.7px;top:563.5px;font-size:7.35px;color:#555">9 registros encontrados.</div>
<div class="a" style="left:0;top:576px;width:1346px;height:1px;background:#f0f0f0"></div>
<div class="a" style="left:1328px;top:279px;width:30px;height:30px;border-radius:50%;background:#00cfff"></div>
<div class="a" style="left:1336px;top:288px;width:1.6px;height:10px;background:#80e6ff"></div>
<div class="a" style="left:1339.5px;top:288px;width:1.6px;height:10px;background:#80e6ff"></div>
</body></html>
